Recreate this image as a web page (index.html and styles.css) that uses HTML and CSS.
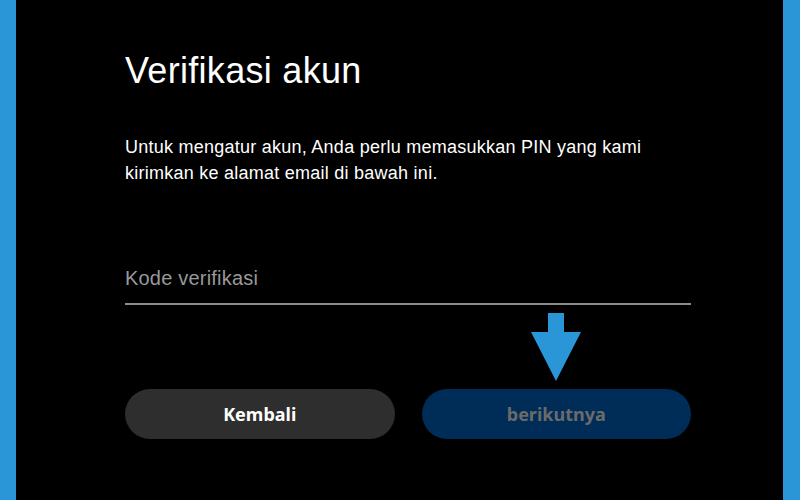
FILE: index.html
```html
<!DOCTYPE html>
<html lang="id">

<head>
    <meta charset="UTF-8">
    <meta name="viewport" content="width=device-width, initial-scale=1.0">
    <title>Verifikasi akun</title>
    <link rel="stylesheet" href="styles.css">
</head>

<body>
    <div class="panel">
        <div class="content">
            <h1 class="title">Verifikasi akun</h1>
            <p class="info">Untuk mengatur akun, Anda perlu memasukkan PIN yang kami kirimkan ke alamat email di bawah ini.</p>
            <input class="code" type="text" placeholder="Kode verifikasi">
            <div class="actions">
                <button class="btn back">Kembali</button>
                <button class="btn next">
                    berikutnya
                    <svg class="arrow" width="50" height="68" viewBox="0 0 50 68">
                        <polygon points="17,0 33,0 33,19 50,19 25,68 0,19 17,19" fill="#2a96d8"/>
                    </svg>
                </button>
            </div>
        </div>
    </div>
</body>

</html>
```

FILE: styles.css
```css
html {
    width: 100%;
    height: 100%;
}

body {
    margin: 0;
    height: 100%;
    background-color: #2a96d8;
    font-family: "Liberation Sans", Arial, sans-serif;
}

.panel {
    margin: 0 17px 0 16px;
    height: 100%;
    background-color: #000;
}

.content {
    padding: 49px 0 0 109px;
    width: 566px;
}

.title {
    margin: 0;
    font-size: 36px;
    font-weight: normal;
    letter-spacing: 0.3px;
    line-height: 43px;
    color: #fff;
}

.info {
    margin: 42px 0 0;
    font-size: 18px;
    letter-spacing: 0.25px;
    line-height: 26px;
    color: #fff;
}

.code {
    display: block;
    box-sizing: border-box;
    width: 100%;
    margin-top: 80px;
    padding: 0 0 13px;
    border: none;
    border-bottom: 2px solid #8c8c8c;
    background: transparent;
    font-family: "Liberation Sans", Arial, sans-serif;
    font-size: 20px;
    letter-spacing: 0.2px;
    line-height: 24px;
    color: #fff;
    outline: none;
}

.code::placeholder {
    color: #999;
}

.actions {
    display: flex;
    gap: 27px;
    margin-top: 84px;
}

.btn {
    position: relative;
    flex: 1;
    height: 50px;
    border: none;
    border-radius: 25px;
    font-family: "Noto Sans", sans-serif;
    font-size: 18px;
    font-weight: bold;
}

.back {
    background-color: #2e2e2e;
    color: #fff;
}

.next {
    background-color: #002d57;
    color: #6b6b6b;
}

.arrow {
    position: absolute;
    left: 109px;
    top: -76px;
}
```
